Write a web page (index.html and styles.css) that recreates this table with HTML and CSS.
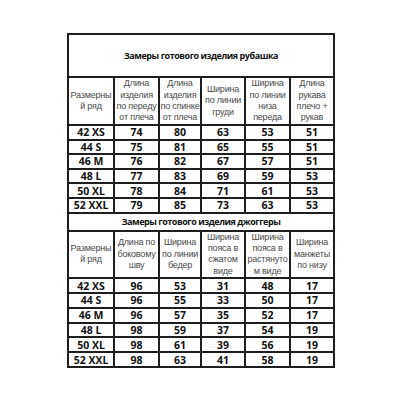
FILE: index.html
```html
<!DOCTYPE html>
<html lang="ru">
<head>
<meta charset="utf-8">
<link rel="stylesheet" href="styles.css">
</head>
<body>
<div class="page">
<table class="sizes">
<colgroup>
<col class="c1"><col class="c2"><col class="c3"><col class="c4"><col class="c5"><col class="c6">
</colgroup>
<tbody>
<tr class="title1"><td colspan="6">Замеры готового изделия рубашка</td></tr>
<tr class="head1">
<td>Размерны<br>й ряд</td>
<td>Длина<br>изделия<br>по переду<br>от плеча</td>
<td>Длина<br>изделия<br>по спинке<br>от плеча</td>
<td>Ширина<br>по линии<br>груди</td>
<td>Ширина<br>по линии<br>низа<br>переда</td>
<td>Длина<br>рукава<br>плечо +<br>рукав</td>
</tr>
<tr class="d1"><td>42 XS</td><td>74</td><td>80</td><td>63</td><td>53</td><td>51</td></tr>
<tr class="d1"><td>44 S</td><td>75</td><td>81</td><td>65</td><td>55</td><td>51</td></tr>
<tr class="d1"><td>46 M</td><td>76</td><td>82</td><td>67</td><td>57</td><td>51</td></tr>
<tr class="d1"><td>48 L</td><td>77</td><td>83</td><td>69</td><td>59</td><td>53</td></tr>
<tr class="d1"><td>50 XL</td><td>78</td><td>84</td><td>71</td><td>61</td><td>53</td></tr>
<tr class="d1"><td>52 XXL</td><td>79</td><td>85</td><td>73</td><td>63</td><td>53</td></tr>
<tr class="title2"><td colspan="6">Замеры готового изделия джоггеры</td></tr>
<tr class="head2">
<td>Размерны<br>й ряд</td>
<td>Длина по<br>боковому<br>шву</td>
<td>Ширина<br>по линии<br>бедер</td>
<td>Ширина<br>пояса в<br>сжатом<br>виде</td>
<td>Ширина<br>пояса в<br>растянуто<br>м виде</td>
<td>Ширина<br>манжеты<br>по низу</td>
</tr>
<tr class="d2"><td>42 XS</td><td>96</td><td>53</td><td>31</td><td>48</td><td>17</td></tr>
<tr class="d2"><td>44 S</td><td>96</td><td>55</td><td>33</td><td>50</td><td>17</td></tr>
<tr class="d2"><td>46 M</td><td>96</td><td>57</td><td>35</td><td>52</td><td>17</td></tr>
<tr class="d2"><td>48 L</td><td>98</td><td>59</td><td>37</td><td>54</td><td>19</td></tr>
<tr class="d2"><td>50 XL</td><td>98</td><td>61</td><td>39</td><td>56</td><td>19</td></tr>
<tr class="d2"><td>52 XXL</td><td>98</td><td>63</td><td>41</td><td>58</td><td>19</td></tr>
</tbody>
</table>
</div>
</body>
</html>
```
FILE: styles.css
```css
html, body {
  margin: 0;
  padding: 0;
  background: #ffffff;
}
.page {
  padding: 33px 0 0 67px;
}
.sizes {
  border-collapse: collapse;
  table-layout: fixed;
  width: 266px;
  font-family: "Open Sans", "Liberation Sans", sans-serif;
  color: #111;
}
.c1 { width: 46px; }
.c2 { width: 45px; }
.c3 { width: 42px; }
.c4 { width: 44px; }
.c5 { width: 45px; }
.c6 { width: 44px; }
.sizes td {
  border: 2px solid #1e1e1e;
  padding: 0;
  text-align: center;
  vertical-align: middle;
  white-space: nowrap;
  overflow: hidden;
}
.title1 td, .title2 td {
  font-weight: 700;
  font-size: 9px;
  line-height: 10px;
  letter-spacing: -0.45px;
}
.title1 { height: 43px; }
.title2 { height: 18px; }
.head1 td, .head2 td {
  font-family: "Liberation Sans", "Open Sans", sans-serif;
  font-size: 9px;
  line-height: 11.4px;
  color: #4a4a4a;
  letter-spacing: -0.2px;
}
.head1 { height: 48px; }
.head2 { height: 46px; }
.d1 td, .d2 td {
  font-weight: 700;
  font-size: 10.5px;
  line-height: 10px;
  color: #111;
}
.d1 { height: 14.6px; }
.d2 { height: 14.8px; }
```
